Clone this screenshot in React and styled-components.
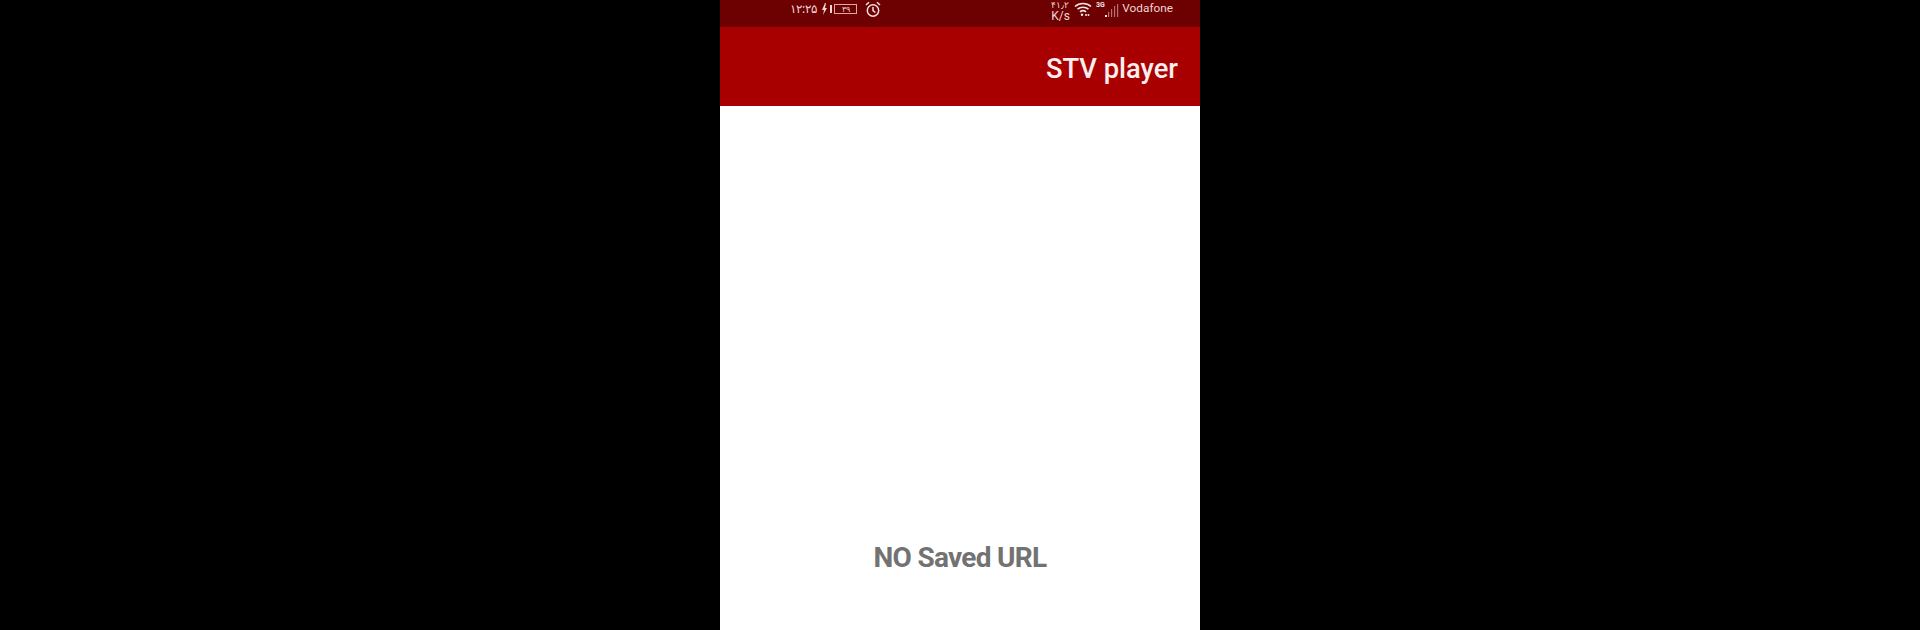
import styled, { createGlobalStyle } from "styled-components";

const GlobalStyle = createGlobalStyle`
  html, body {
    margin: 0;
    background: #000;
  }
`

const Screen = styled.div`
  width: 480px;
  height: 630px;
  margin: 0 auto;
  display: flex;
  flex-direction: column;
  background: #fff;
  overflow: hidden;
  font-family: Roboto, "Liberation Sans", sans-serif;
`

const StatusBar = styled.div`
  height: 27px;
  flex-shrink: 0;
  display: flex;
  justify-content: space-between;
  align-items: stretch;
  padding: 0 27px 0 70px;
  background: #6d0000;
  color: #f0d4d4;
  font-size: 12px;
`

const StatusGroup = styled.div`
  display: flex;
  align-items: center;
  gap: ${(p) => p.$gap}px;
  padding-bottom: 9px;
`

const Clock = styled.span`
  width: 27px;
  font-family: "Noto Sans", sans-serif;
  font-size: 12px;
  line-height: 1;
  letter-spacing: 0.5px;
  white-space: nowrap;
`

const ChargeGroup = styled.div`
  display: flex;
  align-items: center;
  gap: 2px;
`

const Battery = styled.span`
  width: 23px;
  height: 10px;
  box-sizing: border-box;
  display: flex;
  align-items: center;
  justify-content: center;
  border: 1px solid #d9a8a8;
  font-family: "Noto Sans", sans-serif;
  font-size: 8px;
  line-height: 1;
`

const AlarmIcon = styled.svg`
  margin-left: 3px;
`

const Speed = styled.span`
  width: 20px;
  height: 27px;
  align-self: flex-start;
  display: flex;
  flex-direction: column;
  justify-content: flex-end;
  font-size: 12px;
  line-height: 12px;
  padding-bottom: 5px;
  box-sizing: border-box;
`

const SpeedValue = styled.span`
  font-family: "Noto Sans", sans-serif;
  font-size: 9px;
  line-height: 10px;
`

const Carrier = styled.span`
  font-size: 11.8px;
  line-height: 1;
`

const SignalIcon = styled.svg`
  margin-left: 1px;
`

const AppBar = styled.header`
  height: 79px;
  box-sizing: border-box;
  flex-shrink: 0;
  display: flex;
  align-items: center;
  justify-content: flex-end;
  padding: 4px 22px 0 0;
  background: #a80000;
  color: #fbeeee;
  font-size: 27.3px;
  font-weight: 500;
`

const Body = styled.main`
  flex: 1;
  display: flex;
  justify-content: center;
  padding-top: 435px;
`

const Empty = styled.div`
  color: #727272;
  font-size: 28px;
  font-weight: 700;
  line-height: 33px;
  letter-spacing: -0.7px;
`

const App = () => {
  return (
    <>
      <GlobalStyle />
      <Screen>
        <StatusBar>
          <StatusGroup $gap={5}>
            <Clock>۱۲:۲۵</Clock>
            <ChargeGroup>
              <svg width="10" height="12" viewBox="0 0 10 12" fill="#f0d4d4">
                <path d="M3 0 0 7h2l-1 5 4-7H3l1-5z" />
                <rect x="8" y="2" width="2" height="8" />
              </svg>
              <Battery>۳۹</Battery>
            </ChargeGroup>
            <AlarmIcon width="16" height="17" viewBox="0 0 16 17" fill="none" stroke="#f4e0e0" strokeWidth="1.5">
              <circle cx="8" cy="9.500" r="5.700" />
              <path d="M8 6v3.700l2.400 1.800M1 4l3-2.800M15 4l-3-2.800" />
            </AlarmIcon>
          </StatusGroup>
          <StatusGroup $gap={3}>
            <Speed>
              <SpeedValue>۴۱٫۲</SpeedValue>
              K/s
            </Speed>
            <svg width="18" height="16" viewBox="0 0 18 16" fill="none" stroke="#f4e4e4" strokeWidth="1.6">
              <path d="M1 5.500c4.500-4 11.500-4 16 0M3.500 8.200c3-2.600 8-2.600 11 0M6 10.800c1.800-1.400 4.200-1.400 6 0" />
              <circle cx="8" cy="13.800" r="1.200" fill="#f4e4e4" stroke="none" />
              <circle cx="12" cy="14" r="1" fill="#f4e4e4" stroke="none" />
              <circle cx="14.500" cy="14" r="1" fill="#f4e4e4" stroke="none" />
            </svg>
            <SignalIcon width="23" height="18" viewBox="0 0 23 18">
              <text x="0" y="7" fontSize="7" fontWeight="700" fill="#f4e4e4" fontFamily="Roboto, sans-serif">3G</text>
              <rect x="9" y="15" width="2" height="2" fill="#f4e4e4" />
              <rect x="12" y="12" width="1.200" height="5" fill="#b87070" />
              <rect x="15" y="9" width="1.200" height="8" fill="#b87070" />
              <rect x="18" y="6" width="1.200" height="11" fill="#b87070" />
              <rect x="21" y="4" width="1.200" height="13" fill="#b87070" />
            </SignalIcon>
            <Carrier>Vodafone</Carrier>
          </StatusGroup>
        </StatusBar>
        <AppBar>STV player</AppBar>
        <Body>
          <Empty>NO Saved URL</Empty>
        </Body>
      </Screen>
    </>
  );
}

export default App;
